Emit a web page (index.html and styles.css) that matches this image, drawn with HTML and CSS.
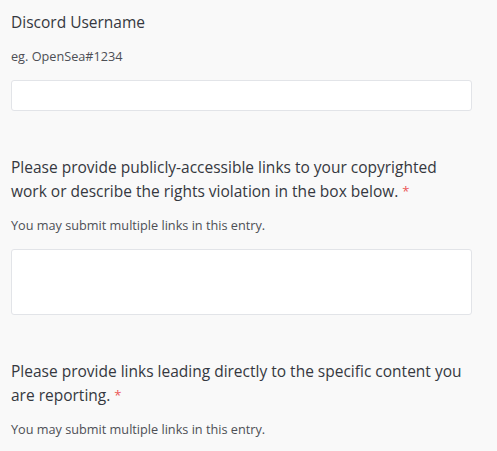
FILE: index.html
```html
<!DOCTYPE html>
<html lang="en">
<head>
  <meta charset="UTF-8">
  <meta name="viewport" content="width=device-width, initial-scale=1.0">
  <title>Report form</title>
  <link rel="stylesheet" href="styles.css">
</head>
<body>
  <form class="form">
    <div class="field">
      <label class="label" for="discord">Discord Username</label>
      <p class="hint">eg. OpenSea#1234</p>
      <input class="input" type="text" id="discord">
    </div>

    <div class="field">
      <label class="label" for="work">Please provide publicly-accessible links to your copyrighted work or describe the rights violation in the box below. <span class="req">*</span></label>
      <p class="hint">You may submit multiple links in this entry.</p>
      <textarea class="input area" id="work"></textarea>
    </div>

    <div class="field">
      <label class="label" for="content">Please provide links leading directly to the specific content you are reporting. <span class="req">*</span></label>
      <p class="hint">You may submit multiple links in this entry.</p>
      <textarea class="input area" id="content"></textarea>
    </div>
  </form>
</body>
</html>
```

FILE: styles.css
```css
body {
  margin: 0;
  background-color: #f9f9f9;
  font-family: 'Open Sans', Arial, sans-serif;
  color: #353840;
}
.form {
  padding: 10px 25px 0 11px;
}
.field {
  margin-bottom: 44px;
}
.label {
  display: block;
  font-size: 15.5px;
  line-height: 24px;
  margin-bottom: 12px;
}
.req {
  color: #eb5757;
  font-size: 13px;
  line-height: 0;
  vertical-align: 1px;
}
.hint {
  margin: 0 0 14px;
  font-size: 12.7px;
  line-height: 20px;
  color: #4d4f55;
}
.input {
  display: block;
  width: 100%;
  height: 31px;
  box-sizing: border-box;
  border: 1px solid #e2e4e8;
  border-radius: 3px;
  background-color: #ffffff;
  font-family: inherit;
  font-size: 14px;
}
.area {
  height: 66px;
  resize: none;
}
```
